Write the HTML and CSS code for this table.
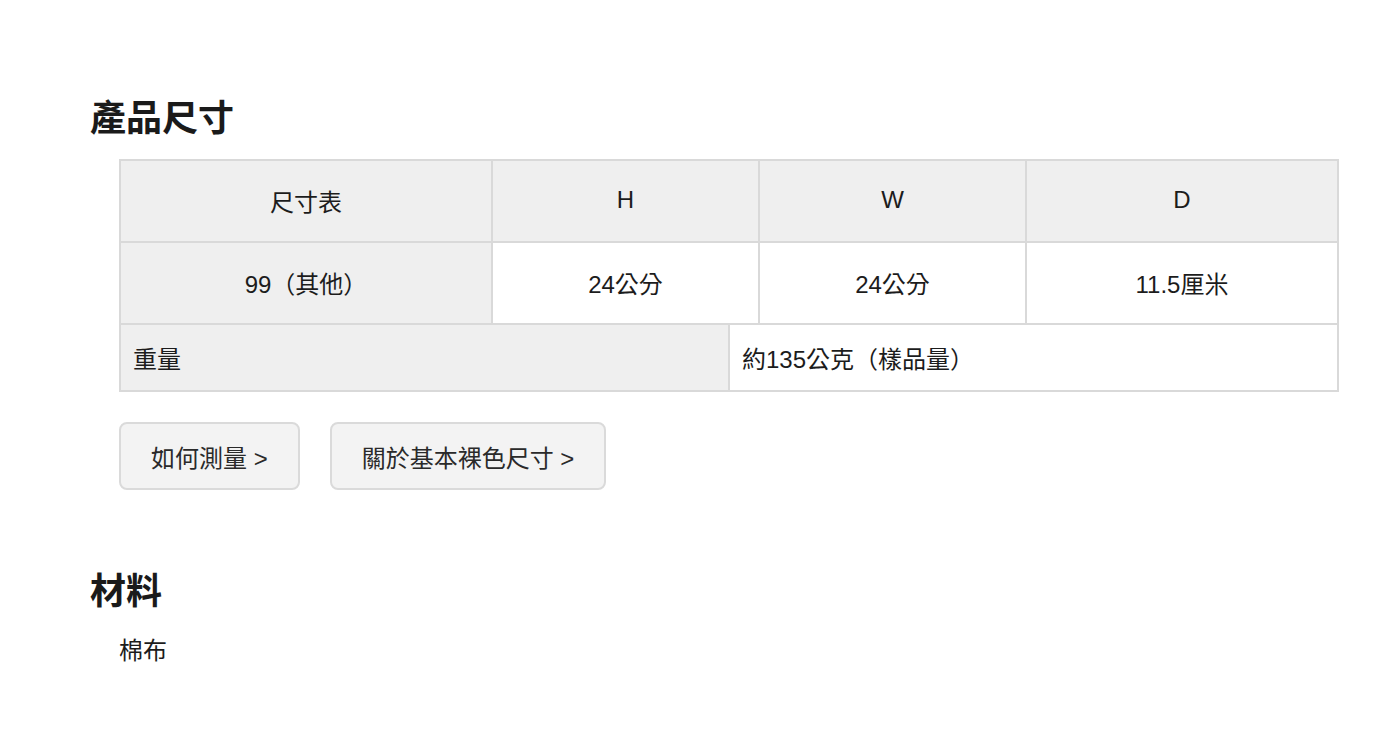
FILE: index.html
```html
<!DOCTYPE html>
<html lang="zh-Hant">
<head>
<meta charset="utf-8">
<title>產品尺寸</title>
<link rel="stylesheet" href="styles.css">
</head>
<body>
<main class="page">
  <section class="section">
    <h2 class="section-title">產品尺寸</h2>
    <div class="section-body">
      <table class="size-table">
        <colgroup>
          <col class="col-label">
          <col class="col-h">
          <col class="col-w">
          <col class="col-d">
        </colgroup>
        <tr class="row-main">
          <th class="cell cell-head">尺寸表</th>
          <th class="cell cell-head">H</th>
          <th class="cell cell-head">W</th>
          <th class="cell cell-head">D</th>
        </tr>
        <tr class="row-main">
          <th class="cell cell-head">99（其他）</th>
          <td class="cell">24公分</td>
          <td class="cell">24公分</td>
          <td class="cell">11.5厘米</td>
        </tr>
      </table>
      <table class="weight-table">
        <tr class="row-weight">
          <th class="wcell wcell-head">重量</th>
          <td class="wcell">約135公克（樣品量）</td>
        </tr>
      </table>
      <div class="buttons">
        <button class="link-btn" type="button">如何測量 &gt;</button>
        <button class="link-btn" type="button">關於基本裸色尺寸 &gt;</button>
      </div>
    </div>
  </section>
  <section class="section section-material">
    <h2 class="section-title">材料</h2>
    <div class="section-body">
      <p class="material-text">棉布</p>
    </div>
  </section>
</main>
</body>
</html>
```

FILE: styles.css
```css
html, body {
  margin: 0;
  padding: 0;
  background: #ffffff;
}

body {
  font-family: "Liberation Sans", "Noto Sans CJK TC", sans-serif;
  color: #1c1c1c;
}

.page {
  padding: 93px 47px 60px 90px;
}

.section-title {
  margin: 0;
  font-size: 36px;
  line-height: 44px;
  font-weight: 700;
  color: #1a1a1a;
  font-family: "Noto Sans CJK TC", sans-serif;
}

.section-body {
  padding-left: 29px;
}

.size-table,
.weight-table {
  width: 1220px;
  border-collapse: collapse;
  table-layout: fixed;
}

.size-table {
  margin-top: 22px;
}

.col-label { width: 372px; }
.col-h { width: 267px; }
.col-w { width: 267px; }

.cell {
  border: 2px solid #d9d9d9;
  height: 82px;
  box-sizing: border-box;
  padding: 0 0 2px;
  text-align: center;
  vertical-align: middle;
  font-size: 24px;
  font-weight: 400;
  color: #1c1c1c;
  background: #ffffff;
}

.cell-head {
  background: #efefef;
}

.weight-table {
  margin-top: 0;
}

.wcell {
  border: 2px solid #d9d9d9;
  border-top: 0;
  height: 66px;
  box-sizing: border-box;
  padding: 0 12px;
  text-align: left;
  vertical-align: middle;
  font-size: 24px;
  font-weight: 400;
  color: #1c1c1c;
  background: #ffffff;
  width: 50%;
}

.wcell-head {
  background: #efefef;
  padding-left: 12px;
}

.buttons {
  display: flex;
  gap: 30px;
  margin-top: 30px;
}

.link-btn {
  height: 68px;
  padding: 0 30px;
  border: 2px solid #dadada;
  border-radius: 8px;
  background: #f3f3f3;
  font-family: "Liberation Sans", "Noto Sans CJK TC", sans-serif;
  font-size: 24px;
  color: #2a2a2a;
  cursor: pointer;
}

.section-material {
  margin-top: 76px;
}

.material-text {
  margin: 25px 0 0;
  font-size: 24px;
  line-height: 32px;
  color: #1c1c1c;
}
```
